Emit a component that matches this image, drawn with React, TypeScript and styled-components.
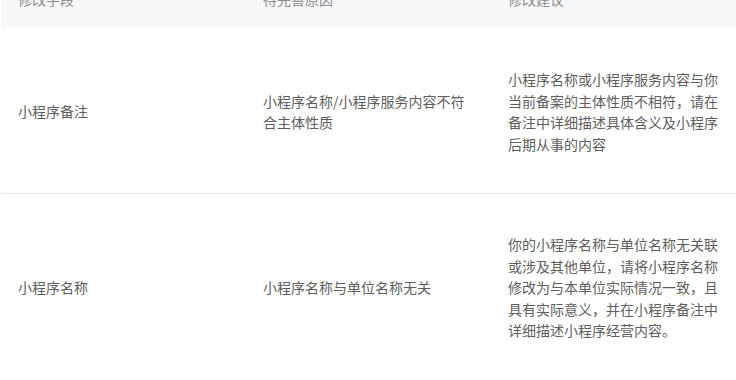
import React from "react";
import styled, { createGlobalStyle } from "styled-components";

type Item = {
  field: string;
  reason: string;
  advice: string;
};

const items: Item[] = [
  {
    field: "小程序备注",
    reason: "小程序名称/小程序服务内容不符合主体性质",
    advice:
      "小程序名称或小程序服务内容与你当前备案的主体性质不相符，请在备注中详细描述具体含义及小程序后期从事的内容",
  },
  {
    field: "小程序名称",
    reason: "小程序名称与单位名称无关",
    advice:
      "你的小程序名称与单位名称无关联或涉及其他单位，请将小程序名称修改为与本单位实际情况一致，且具有实际意义，并在小程序备注中详细描述小程序经营内容。",
  },
];

function App() {
  return (
    <>
      <GlobalStyle />
      <Table>
        <HeadRow>
          <HeadCell>修改字段</HeadCell>
          <HeadCell>待完善原因</HeadCell>
          <HeadCell>修改建议</HeadCell>
        </HeadRow>
        {items.map((item) => (
          <Row key={item.field}>
            <Cell>{item.field}</Cell>
            <Cell>{item.reason}</Cell>
            <Cell>{item.advice}</Cell>
          </Row>
        ))}
      </Table>
    </>
  );
}

export default App;

const GlobalStyle = createGlobalStyle`
  html, body {
    margin: 0;
    padding: 0;
    background: #ffffff;
    overflow: hidden;
  }
  body {
    font-family: "Noto Sans CJK SC", "Noto Sans", sans-serif;
    font-size: 14px;
  }
`;

const Table = styled.div`
  margin-top: -30.5px;
  margin-left: 1px;
  display: flex;
  flex-direction: column;
`;

const HeadRow = styled.div`
  display: grid;
  grid-template-columns: repeat(3, 1fr);
  background: #f7f8fa;
`;

const HeadCell = styled.div`
  padding: 19px 16px 19px 17px;
  line-height: 21.5px;
  color: #8c8c8c;
`;

const Row = styled.div`
  display: grid;
  grid-template-columns: repeat(3, 1fr);
  align-items: center;
  border-bottom: 1px solid #e7e7e7;
`;

const Cell = styled.div`
  padding: 40px 15px 38px 17px;
  line-height: 21.5px;
  color: #5e5e5e;
  word-break: break-all;
`;
